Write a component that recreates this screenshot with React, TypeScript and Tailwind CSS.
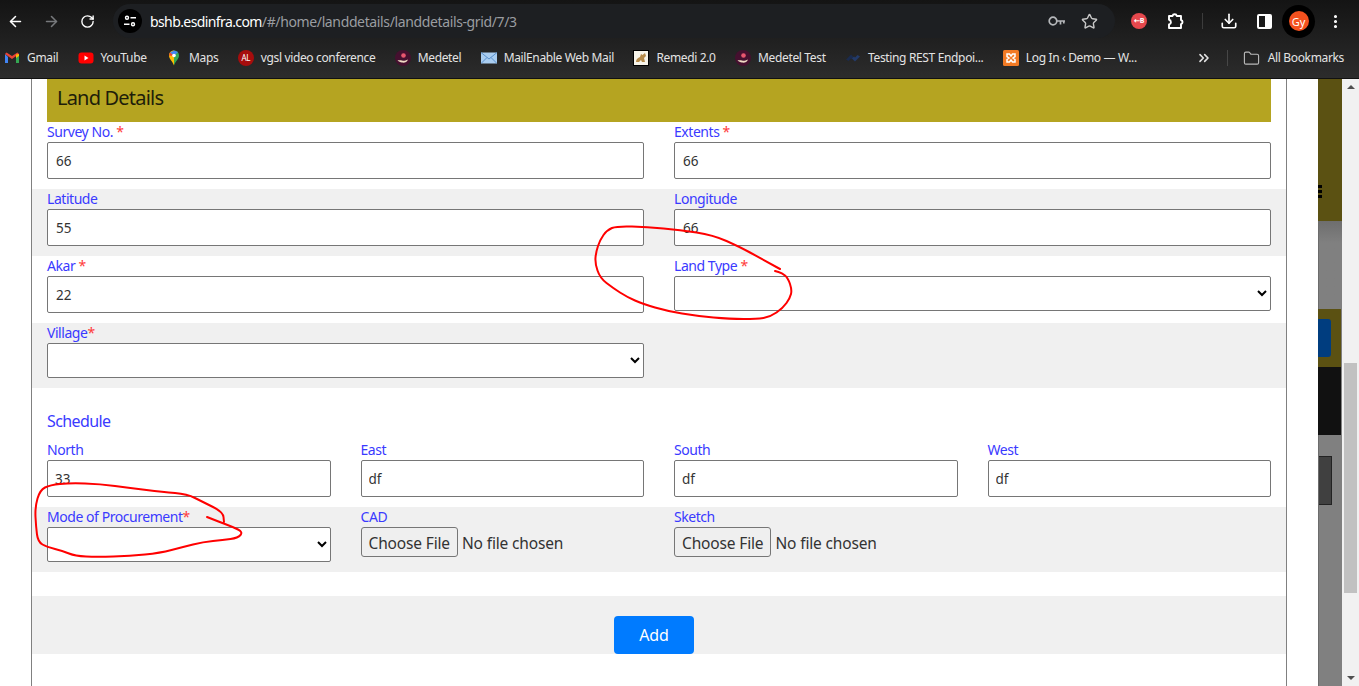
import React from 'react';
import { ArrowLeft, ArrowRight, RotateCw, Star, Download, EllipsisVertical, Folder, ChevronsRight } from 'lucide-react';

const uiFont = "font-['Noto_Sans',sans-serif]";

function smoothPath(pts: number[][]) {
    let d = `M${pts[0][0]} ${pts[0][1]}`;
    for (let i = 1; i < pts.length - 1; i++) {
        const mx = (pts[i][0] + pts[i + 1][0]) / 2;
        const my = (pts[i][1] + pts[i + 1][1]) / 2;
        d += ` Q${pts[i][0]} ${pts[i][1]} ${mx} ${my}`;
    }
    const last = pts[pts.length - 1];
    return d + ` L${last[0]} ${last[1]}`;
}

const landScribble = [
    [780, 269], [760, 258], [740, 247], [713, 235], [680, 230], [647, 227], [617, 226], [607, 230], [600, 240], [596, 252],
    [595, 263], [600, 278], [613, 288], [627, 297], [643, 304], [667, 311], [697, 316], [730, 319], [757, 319], [770, 317],
    [783, 308], [790, 298], [792, 290], [788, 278], [782, 273], [775, 271],
];
const modeScribble = [
    [207, 517], [217, 521], [233, 527], [243, 532], [238, 538], [223, 540], [203, 542], [183, 547], [160, 553], [130, 556],
    [97, 557], [75, 556], [63, 551], [47, 547], [38, 542], [36, 527], [35, 507], [40, 490], [50, 485], [70, 483], [100, 484],
    [130, 488], [163, 492], [187, 494], [203, 502], [223, 512], [224, 522],
];

function Gmail() {
    return (
        <svg width="16" height="16" viewBox="0 0 16 16">
            <path d="M1 4v9h3V7z" fill="#4285f4" />
            <path d="M12 7v6h3V4z" fill="#34a853" />
            <path d="M1 4l7 5 7-5-1.500-1.500L8 6 2.500 2.500z" fill="#ea4335" />
            <path d="M12 4.500 15 4v2l-3 2z" fill="#fbbc04" />
        </svg>
    );
}

function Youtube() {
    return (
        <svg width="16" height="16" viewBox="0 0 16 16">
            <rect x="0.500" y="2.500" width="15" height="11" rx="3" fill="#f00" />
            <path d="M6.500 5.500v5l4-2.500z" fill="#fff" />
        </svg>
    );
}

function Maps() {
    return (
        <svg width="16" height="16" viewBox="0 0 16 16">
            <path d="M8 .500C5 .500 3 2.800 3 5.500c0 3.500 3.500 5.500 5 10z" fill="#fbbc04" />
            <path d="M8 .500c3 0 5 2.300 5 5 0 3.500-3.500 5.500-5 10V8z" fill="#34a853" />
            <path d="M4 2.500 8 .500l4 1.500-4 4z" fill="#4285f4" />
            <path d="M3 5.500 4 2.500 8 6z" fill="#ea4335" />
            <circle cx="8" cy="5.500" r="1.800" fill="#fff" />
        </svg>
    );
}

function AlBadge() {
    return (
        <span className="flex size-4 items-center justify-center rounded-full bg-[#a60d0d] text-[8px] leading-none text-white">AL</span>
    );
}

function Medetel() {
    return (
        <svg width="16" height="16" viewBox="0 0 16 16">
            <circle cx="8" cy="8" r="8" fill="#45102f" />
            <circle cx="8.500" cy="5.500" r="2.300" fill="#e8566f" />
            <path d="M2.500 10c2 .500 3 0 4.500.500s3 .500 6-1c-1 3-4 3.500-6 3s-3-.500-4.500-2.500z" fill="#f1dcc4" />
        </svg>
    );
}

function Mail() {
    return (
        <svg width="16" height="16" viewBox="0 0 16 16">
            <rect x="0" y="2.500" width="16" height="11" fill="#a9cdf0" />
            <path d="M0 2.500 8 9l8-6.500M0 13.500 6 7.500M16 13.500l-6-6" fill="none" stroke="#5a90cc" />
        </svg>
    );
}

function Remedi() {
    return (
        <svg width="16" height="16" viewBox="0 0 16 16">
            <rect x="0" y="0" width="16" height="16" fill="#000" />
            <rect x="1" y="1" width="14" height="14" fill="#f7f4ea" />
            <path d="M3 12c0-3 2-4 4-5l1-3 1.500 1L12 3l1 3-2 2 1 4H9L8 10l-2 2z" fill="#b58a4a" />
        </svg>
    );
}

function RestLogo() {
    return (
        <svg width="16" height="16" viewBox="0 0 16 16">
            <path d="M1 9.500 6 4.500l3 3-2 2-1-1-2.500 2.500z" fill="#1b2b4d" />
            <path d="M15 6.500 10 11.500l-3-3 2-2 1 1 2.500-2.500z" fill="#233a68" />
        </svg>
    );
}

function Xampp() {
    return (
        <svg width="16" height="16" viewBox="0 0 16 16">
            <rect width="16" height="16" rx="1.500" fill="#f27a24" />
            <path d="M4 4h2.500L8 6l1.500-2H12v2.500L10 8l2 1.500V12H9.500L8 10l-1.500 2H4V9.500L6 8 4 6.500z" fill="none" stroke="#fff" strokeWidth="1.500" />
        </svg>
    );
}

function KeyIcon() {
    return (
        <svg width="18" height="12" viewBox="0 0 18 12" fill="none" stroke="#b5b7ba" strokeWidth="1.700">
            <circle cx="5" cy="6" r="3.800" />
            <path d="M9 6h8M12.500 6v3.500M15.800 6v2.500" />
        </svg>
    );
}

function ExtensionIcon() {
    return (
        <svg width="18" height="18" viewBox="0 0 18 18" fill="none" stroke="#fff" strokeWidth="1.900" strokeLinejoin="round">
            <path d="M3 4h3.500a2.200 2.200 0 0 1 4.300 0H15v4a2.200 2.200 0 0 1 0 4.200V16H3v-3.500a2.400 2.400 0 0 0 0-4.700z" />
        </svg>
    );
}

const bookmarks = [
    { name: 'Gmail', icon: <Gmail /> },
    { name: 'YouTube', icon: <Youtube /> },
    { name: 'Maps', icon: <Maps /> },
    { name: 'vgsl video conference', icon: <AlBadge /> },
    { name: 'Medetel', icon: <Medetel /> },
    { name: 'MailEnable Web Mail', icon: <Mail /> },
    { name: 'Remedi 2.0', icon: <Remedi /> },
    { name: 'Medetel Test', icon: <Medetel /> },
    { name: 'Testing REST Endpoi...', icon: <RestLogo /> },
    { name: 'Log In ‹ Demo — W...', icon: <Xampp /> },
];

function BrowserChrome() {
    return (
        <div className={`h-[79px] shrink-0 border-b border-[#111] bg-gradient-to-b from-[#141414] to-[#2c2c2c] pt-[4px] text-[#e3e3e3] ${uiFont}`}>
            {/* toolbar */}
            <div className="flex h-[34px] items-center">
                <div className="flex w-[113px] items-center">
                    <ArrowLeft size={17} strokeWidth={2.2} className="ml-[7px] text-white" />
                    <ArrowRight size={17} strokeWidth={2.2} className="ml-[19px] text-[#77797c]" />
                    <RotateCw size={15} strokeWidth={2.2} className="ml-[20px] text-white" />
                </div>
                <div className="flex h-[34px] w-[1002px] items-center rounded-full bg-[#1d1f22] pl-[5px]">
                    <span className="flex size-[24px] items-center justify-center rounded-full bg-black">
                        <svg width="14" height="14" viewBox="0 0 14 14" fill="none" stroke="#fff" strokeWidth="1.400">
                            <circle cx="4" cy="3.800" r="1.500" />
                            <path d="M7.500 3.800H13M1 10.200h5.500" />
                            <circle cx="10" cy="10.200" r="1.500" />
                        </svg>
                    </span>
                    <span className="ml-[8px] whitespace-nowrap text-[14px] tracking-[-0.6px] text-white">
                        bshb.esdinfra.com<span className="tracking-[-0.37px] text-[#9a9da1]">/#/home/landdetails/landdetails-grid/7/3</span>
                    </span>
                    <span className="ml-auto"><KeyIcon /></span>
                    <Star size={17} strokeWidth={2} className="ml-[15px] mr-[17px] text-[#c7c7c7]" />
                </div>
                <div className="flex flex-1 items-center">
                    <span className="ml-[16px] flex size-[16px] items-center justify-center rounded-full bg-[#e5484d] text-[7px] font-bold text-white">⇠B</span>
                    <span className="ml-[19px]"><ExtensionIcon /></span>
                    <span className="ml-[18px] h-[16px] w-px bg-[#3c3c3c]" />
                    <Download size={18} strokeWidth={2.2} className="ml-[17px] text-white" />
                    <span className="ml-[19px] flex h-[15px] w-[15px] justify-end rounded-[2px] border-2 border-white">
                        <span className="w-[5px] bg-white" />
                    </span>
                    <span className="ml-[10px] flex size-[33px] items-center justify-center rounded-full bg-black">
                        <span className="flex size-[20px] items-center justify-center rounded-full bg-[#f4511e] text-[11px] leading-none text-white">Gy</span>
                    </span>
                    <EllipsisVertical size={17} strokeWidth={2.4} className="ml-[12px] text-white" />
                </div>
            </div>
            {/* bookmarks */}
            <div className="mt-[3px] flex h-[34px] items-center pl-[4px] text-[12px] tracking-[-0.35px]">
                <div className="flex items-center gap-[19.400px]">
                    {bookmarks.map((b, i) => (
                        <div key={i} className="flex items-center gap-[7px] whitespace-nowrap">
                            {b.icon}
                            <span>{b.name}</span>
                        </div>
                    ))}
                </div>
                <ChevronsRight size={16} strokeWidth={2.4} className="ml-[59px] text-[#e3e3e3]" />
                <span className="ml-[15px] h-[16px] w-px bg-[#474747]" />
                <Folder size={17} strokeWidth={1.6} className="ml-[15px] text-[#b9b9b9]" />
                <span className="ml-[8px] whitespace-nowrap">All Bookmarks</span>
            </div>
        </div>
    );
}

function Label({ text, star, sep = ' ' }: { text: string; star?: boolean; sep?: string }) {
    return (
        <div className="h-[20px] text-[14px] leading-[20px] tracking-[-0.45px] text-[#3a3aff]">
            {text}
            {star && <span className="text-[#ff3b3b]">{sep}*</span>}
        </div>
    );
}

function TextField({ label, value, star }: { label: string; value: string; star?: boolean }) {
    return (
        <div className="col-span-2">
            <Label text={label} star={star} />
            <input readOnly defaultValue={value} className="block h-[37px] w-full rounded-[2px] border border-[#767676] bg-white px-[8px] text-[13.500px] text-[#333]" />
        </div>
    );
}

function SmallField({ label, value }: { label: string; value: string }) {
    return (
        <div>
            <Label text={label} />
            <input readOnly defaultValue={value} className="block h-[37px] w-full rounded-[2px] border border-[#767676] bg-white px-[7px] text-[13.500px] text-[#333]" />
        </div>
    );
}

function SelectField({ label, star, sep, wide }: { label: string; star?: boolean; sep?: string; wide?: boolean }) {
    return (
        <div className={wide ? 'col-span-2' : ''}>
            <Label text={label} star={star} sep={sep} />
            <select className="block h-[35px] w-full rounded-[2px] border border-[#767676] bg-white text-[14px]">
                <option value=""></option>
            </select>
        </div>
    );
}

function FileField({ label }: { label: string }) {
    return (
        <div>
            <Label text={label} />
            <input
                type="file"
                className="block h-[30px] w-full text-[15.500px] leading-[30px] tracking-[-0.15px] text-[#333] file:mr-[4px] file:h-[30px] file:rounded-[3px] file:border file:border-[#767676] file:bg-[#efefef] file:px-[7px] file:text-[#333]"
            />
        </div>
    );
}

const row = 'grid grid-cols-4 gap-x-[30px] px-[15px] pb-[10px]';

function LandForm() {
    return (
        <div className={`h-full w-[1256px] border-x border-[#808080] bg-white ${uiFont}`}>
            <div className="mx-[15px] flex h-[43px] items-center bg-[#b5a421] pb-[5px] pl-[10px] text-[20px] tracking-[-0.8px] text-[#1e1e0a]">Land Details</div>

            <div className={row}>
                <TextField label="Survey No." value="66" star />
                <TextField label="Extents" value="66" star />
            </div>
            <div className={`${row} bg-[#f0f0f0]`}>
                <TextField label="Latitude" value="55" />
                <TextField label="Longitude" value="66" />
            </div>
            <div className={row}>
                <TextField label="Akar" value="22" star />
                <SelectField label="Land Type" star wide />
            </div>
            <div className={`${row} bg-[#f0f0f0]`}>
                <SelectField label="Village" star sep="" wide />
            </div>

            <div className="h-[52px] px-[15px] pt-[22px] text-[16px] leading-[22px] tracking-[-0.6px] text-[#3a3aff]">Schedule</div>

            <div className={row}>
                <SmallField label="North" value="33" />
                <SmallField label="East" value="df" />
                <SmallField label="South" value="df" />
                <SmallField label="West" value="df" />
            </div>
            <div className={`${row} bg-[#f0f0f0]`}>
                <SelectField label="Mode of Procurement" star sep="" />
                <FileField label="CAD" />
                <FileField label="Sketch" />
            </div>

            <div className="mt-[24px] flex h-[58px] justify-center bg-[#f0f0f0] pr-[10px] pt-[20px]">
                <button className="h-[38px] w-[80px] rounded-[4px] bg-[#007bff] text-[16px] tracking-[-0.2px] text-white">Add</button>
            </div>
        </div>
    );
}

// page behind the modal, only a sliver of it shows on the right
function Backdrop() {
    return (
        <div className="flex h-full w-[24px] flex-col bg-[#808080]">
            <div className="flex h-[142px] shrink-0 flex-col gap-[2.500px] bg-[#5b5112] pt-[106px]">
                <span className="h-[2.500px] w-[4px] bg-black" />
                <span className="h-[2.500px] w-[4px] bg-black" />
                <span className="h-[2.500px] w-[4px] bg-black" />
            </div>
            <div className="h-[88px] shrink-0 border-l border-[#6c6c6c] bg-gradient-to-b from-[#6e6e6e] to-[#808080] to-[25%]" />
            <div className="flex h-[58px] w-[23px] shrink-0 items-center bg-[#5b5112]">
                <span className="h-[38px] w-[13px] rounded-r-[3px] bg-[#003d7f]" />
            </div>
            <div className="h-[68px] w-[23px] shrink-0 bg-[#111]" />
            <div className="flex-1 border-l border-[#6c6c6c] pt-[21px]">
                <div className="h-[49px] w-[13px] border-y border-r border-[#222] bg-[#404040]" />
            </div>
        </div>
    );
}

function Scrollbar() {
    return (
        <div className="flex h-full w-[17px] flex-col items-center bg-[#f1f1f1]">
            <div className="flex h-[284px] w-full shrink-0 justify-center pt-[6px]">
                <span className="h-0 w-0 border-x-[4px] border-b-[4px] border-x-transparent border-b-[#505050]" />
            </div>
            <div className="h-[230px] w-[13px] shrink-0 bg-[#c1c1c1]" />
            <div className="flex w-full flex-1 items-end justify-center pb-[6px]">
                <span className="h-0 w-0 border-x-[4px] border-t-[4px] border-x-transparent border-t-[#505050]" />
            </div>
        </div>
    );
}

export default function App() {
    return (
        <div className="relative flex h-[686px] w-[1359px] flex-col overflow-hidden bg-white">
            <BrowserChrome />
            <div className="flex h-[607px]">
                <div className="w-[31px] shrink-0" />
                <LandForm />
                <div className="w-[31px] shrink-0" />
                <Backdrop />
                <Scrollbar />
            </div>

            {/* red pen marks drawn over the screenshot */}
            <svg className="pointer-events-none absolute left-0 top-0" width="1359" height="686" fill="none" stroke="#f00" strokeWidth="2" strokeLinecap="round">
                <path d={smoothPath(landScribble)} />
                <path d={smoothPath(modeScribble)} />
            </svg>
        </div>
    );
}
